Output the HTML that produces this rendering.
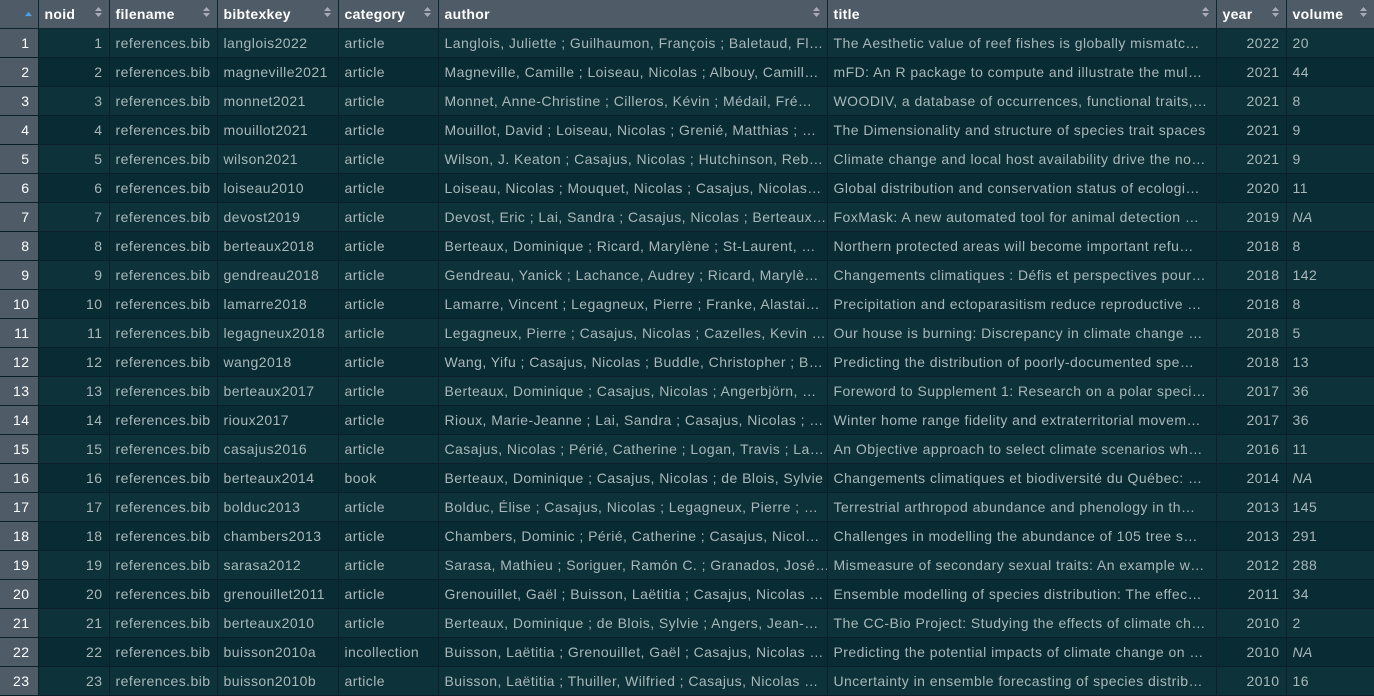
<!DOCTYPE html>
<html><head><meta charset="utf-8"><style>
*{margin:0;padding:0;box-sizing:border-box}
body{width:1374px;height:695px;overflow:hidden;background:#0a2c35;font-family:"Liberation Sans","DejaVu Sans",sans-serif;font-size:14px}
table{border-collapse:collapse;table-layout:fixed;width:1374px}
th{height:28px;background:#4f5c67;color:#fff;font-weight:bold;text-align:left;padding:0 6px;border-right:1px solid #0f2730;border-bottom:1px solid #0f2730;position:relative;font-size:14px;letter-spacing:0.3px}
th .s{position:absolute;right:7px;top:6px;width:7px;height:12px}
td{height:29px;color:#a9b7b9;padding:0 6px;border-right:1px solid #0c2029;border-bottom:1px solid #0c2029;white-space:nowrap;overflow:hidden;letter-spacing:0.45px}
tr:nth-child(odd) td{background:#0d323a}
tr:nth-child(even) td{background:#092b34}
td.rn{background:#4f5c67!important;color:#fff;text-align:right;padding-right:8px}
td.r{text-align:right}
i{font-style:italic}
</style></head><body>
<table>
<colgroup><col style="width:38px"><col style="width:71px"><col style="width:108px"><col style="width:121px"><col style="width:100px"><col style="width:389px"><col style="width:389px"><col style="width:70px"><col style="width:88px"></colgroup>
<thead><tr>
<th><svg class="s" style="right:6px;top:8px" viewBox="0 0 10 6"><path d="M0 6L5 0L10 6Z" fill="#4aa3e8"/></svg></th>
<th>noid<svg class="s" viewBox="0 0 7 12"><path d="M0 5L3.5 1L7 5ZM0 7L3.5 11L7 7Z" fill="#aab"/></svg></th>
<th>filename<svg class="s" viewBox="0 0 7 12"><path d="M0 5L3.5 1L7 5ZM0 7L3.5 11L7 7Z" fill="#aab"/></svg></th>
<th>bibtexkey<svg class="s" viewBox="0 0 7 12"><path d="M0 5L3.5 1L7 5ZM0 7L3.5 11L7 7Z" fill="#aab"/></svg></th>
<th>category<svg class="s" viewBox="0 0 7 12"><path d="M0 5L3.5 1L7 5ZM0 7L3.5 11L7 7Z" fill="#aab"/></svg></th>
<th>author<svg class="s" viewBox="0 0 7 12"><path d="M0 5L3.5 1L7 5ZM0 7L3.5 11L7 7Z" fill="#aab"/></svg></th>
<th>title<svg class="s" viewBox="0 0 7 12"><path d="M0 5L3.5 1L7 5ZM0 7L3.5 11L7 7Z" fill="#aab"/></svg></th>
<th>year<svg class="s" viewBox="0 0 7 12"><path d="M0 5L3.5 1L7 5ZM0 7L3.5 11L7 7Z" fill="#aab"/></svg></th>
<th>volume<svg class="s" viewBox="0 0 7 12"><path d="M0 5L3.5 1L7 5ZM0 7L3.5 11L7 7Z" fill="#aab"/></svg></th>
</tr></thead>
<tbody>
<tr><td class="rn">1</td><td class="r">1</td><td>references.bib</td><td>langlois2022</td><td>article</td><td>Langlois, Juliette ; Guilhaumon, François ; Baletaud, Fl…</td><td>The Aesthetic value of reef fishes is globally mismatc…</td><td class="r">2022</td><td>20</td></tr>
<tr><td class="rn">2</td><td class="r">2</td><td>references.bib</td><td>magneville2021</td><td>article</td><td>Magneville, Camille ; Loiseau, Nicolas ; Albouy, Camill…</td><td>mFD: An R package to compute and illustrate the mul…</td><td class="r">2021</td><td>44</td></tr>
<tr><td class="rn">3</td><td class="r">3</td><td>references.bib</td><td>monnet2021</td><td>article</td><td>Monnet, Anne-Christine ; Cilleros, Kévin ; Médail, Fré…</td><td>WOODIV, a database of occurrences, functional traits,…</td><td class="r">2021</td><td>8</td></tr>
<tr><td class="rn">4</td><td class="r">4</td><td>references.bib</td><td>mouillot2021</td><td>article</td><td>Mouillot, David ; Loiseau, Nicolas ; Grenié, Matthias ; …</td><td>The Dimensionality and structure of species trait spaces</td><td class="r">2021</td><td>9</td></tr>
<tr><td class="rn">5</td><td class="r">5</td><td>references.bib</td><td>wilson2021</td><td>article</td><td>Wilson, J. Keaton ; Casajus, Nicolas ; Hutchinson, Reb…</td><td>Climate change and local host availability drive the no…</td><td class="r">2021</td><td>9</td></tr>
<tr><td class="rn">6</td><td class="r">6</td><td>references.bib</td><td>loiseau2010</td><td>article</td><td>Loiseau, Nicolas ; Mouquet, Nicolas ; Casajus, Nicolas…</td><td>Global distribution and conservation status of ecologi…</td><td class="r">2020</td><td>11</td></tr>
<tr><td class="rn">7</td><td class="r">7</td><td>references.bib</td><td>devost2019</td><td>article</td><td>Devost, Eric ; Lai, Sandra ; Casajus, Nicolas ; Berteaux…</td><td>FoxMask: A new automated tool for animal detection …</td><td class="r">2019</td><td><i>NA</i></td></tr>
<tr><td class="rn">8</td><td class="r">8</td><td>references.bib</td><td>berteaux2018</td><td>article</td><td>Berteaux, Dominique ; Ricard, Marylène ; St-Laurent, …</td><td>Northern protected areas will become important refu…</td><td class="r">2018</td><td>8</td></tr>
<tr><td class="rn">9</td><td class="r">9</td><td>references.bib</td><td>gendreau2018</td><td>article</td><td>Gendreau, Yanick ; Lachance, Audrey ; Ricard, Marylè…</td><td>Changements climatiques : Défis et perspectives pour…</td><td class="r">2018</td><td>142</td></tr>
<tr><td class="rn">10</td><td class="r">10</td><td>references.bib</td><td>lamarre2018</td><td>article</td><td>Lamarre, Vincent ; Legagneux, Pierre ; Franke, Alastai…</td><td>Precipitation and ectoparasitism reduce reproductive …</td><td class="r">2018</td><td>8</td></tr>
<tr><td class="rn">11</td><td class="r">11</td><td>references.bib</td><td>legagneux2018</td><td>article</td><td>Legagneux, Pierre ; Casajus, Nicolas ; Cazelles, Kevin …</td><td>Our house is burning: Discrepancy in climate change …</td><td class="r">2018</td><td>5</td></tr>
<tr><td class="rn">12</td><td class="r">12</td><td>references.bib</td><td>wang2018</td><td>article</td><td>Wang, Yifu ; Casajus, Nicolas ; Buddle, Christopher ; B…</td><td>Predicting the distribution of poorly-documented spe…</td><td class="r">2018</td><td>13</td></tr>
<tr><td class="rn">13</td><td class="r">13</td><td>references.bib</td><td>berteaux2017</td><td>article</td><td>Berteaux, Dominique ; Casajus, Nicolas ; Angerbjörn, …</td><td>Foreword to Supplement 1: Research on a polar speci…</td><td class="r">2017</td><td>36</td></tr>
<tr><td class="rn">14</td><td class="r">14</td><td>references.bib</td><td>rioux2017</td><td>article</td><td>Rioux, Marie-Jeanne ; Lai, Sandra ; Casajus, Nicolas ; …</td><td>Winter home range fidelity and extraterritorial movem…</td><td class="r">2017</td><td>36</td></tr>
<tr><td class="rn">15</td><td class="r">15</td><td>references.bib</td><td>casajus2016</td><td>article</td><td>Casajus, Nicolas ; Périé, Catherine ; Logan, Travis ; La…</td><td>An Objective approach to select climate scenarios wh…</td><td class="r">2016</td><td>11</td></tr>
<tr><td class="rn">16</td><td class="r">16</td><td>references.bib</td><td>berteaux2014</td><td>book</td><td>Berteaux, Dominique ; Casajus, Nicolas ; de Blois, Sylvie</td><td>Changements climatiques et biodiversité du Québec: …</td><td class="r">2014</td><td><i>NA</i></td></tr>
<tr><td class="rn">17</td><td class="r">17</td><td>references.bib</td><td>bolduc2013</td><td>article</td><td>Bolduc, Élise ; Casajus, Nicolas ; Legagneux, Pierre ; …</td><td>Terrestrial arthropod abundance and phenology in th…</td><td class="r">2013</td><td>145</td></tr>
<tr><td class="rn">18</td><td class="r">18</td><td>references.bib</td><td>chambers2013</td><td>article</td><td>Chambers, Dominic ; Périé, Catherine ; Casajus, Nicol…</td><td>Challenges in modelling the abundance of 105 tree s…</td><td class="r">2013</td><td>291</td></tr>
<tr><td class="rn">19</td><td class="r">19</td><td>references.bib</td><td>sarasa2012</td><td>article</td><td>Sarasa, Mathieu ; Soriguer, Ramón C. ; Granados, José…</td><td>Mismeasure of secondary sexual traits: An example w…</td><td class="r">2012</td><td>288</td></tr>
<tr><td class="rn">20</td><td class="r">20</td><td>references.bib</td><td>grenouillet2011</td><td>article</td><td>Grenouillet, Gaël ; Buisson, Laëtitia ; Casajus, Nicolas …</td><td>Ensemble modelling of species distribution: The effec…</td><td class="r">2011</td><td>34</td></tr>
<tr><td class="rn">21</td><td class="r">21</td><td>references.bib</td><td>berteaux2010</td><td>article</td><td>Berteaux, Dominique ; de Blois, Sylvie ; Angers, Jean-…</td><td>The CC-Bio Project: Studying the effects of climate ch…</td><td class="r">2010</td><td>2</td></tr>
<tr><td class="rn">22</td><td class="r">22</td><td>references.bib</td><td>buisson2010a</td><td>incollection</td><td>Buisson, Laëtitia ; Grenouillet, Gaël ; Casajus, Nicolas …</td><td>Predicting the potential impacts of climate change on …</td><td class="r">2010</td><td><i>NA</i></td></tr>
<tr><td class="rn">23</td><td class="r">23</td><td>references.bib</td><td>buisson2010b</td><td>article</td><td>Buisson, Laëtitia ; Thuiller, Wilfried ; Casajus, Nicolas …</td><td>Uncertainty in ensemble forecasting of species distrib…</td><td class="r">2010</td><td>16</td></tr>
</tbody></table>
</body></html>
